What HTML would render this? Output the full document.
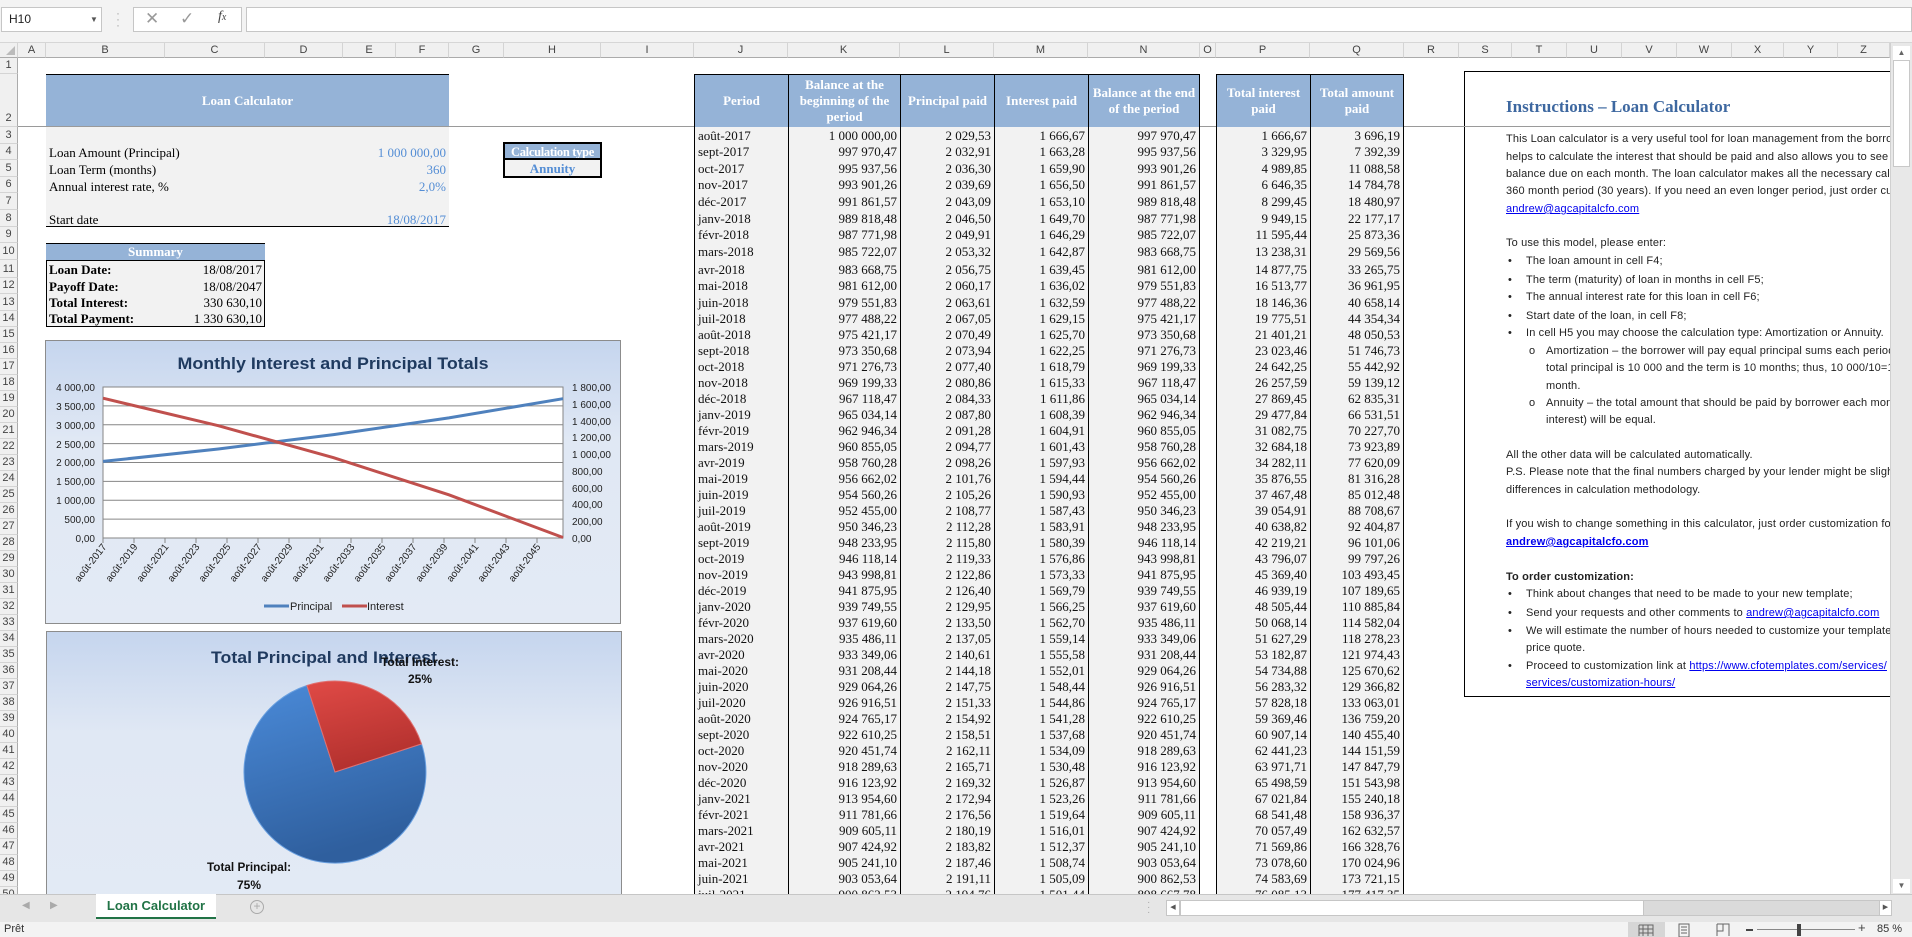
<!DOCTYPE html>
<html><head><meta charset="utf-8">
<style>
*{box-sizing:border-box;margin:0;padding:0}
body{width:1912px;height:937px;overflow:hidden;background:#fff;position:relative;font-family:"Liberation Sans",sans-serif}
.a{position:absolute}
#top{left:0;top:0;width:1912px;height:43px;background:#f3f3f3;border-bottom:1px solid #d6d6d6}
.ch{position:absolute;top:43px;height:15px;font-size:11px;color:#444;text-align:center;line-height:15px;border-right:1px solid #d4d4d4;background:#f0f0f0;border-bottom:1px solid #ababab}
.rn{position:absolute;left:0;width:18px;font-size:11px;color:#444;background:#f0f0f0;border-bottom:1px solid #d4d4d4;border-right:1px solid #ababab;display:flex;align-items:flex-end;justify-content:center;line-height:13px;padding-bottom:1px}
.sv{font-family:"Liberation Serif",serif;font-size:13px}
.r{position:absolute;left:694px;display:flex;font-family:"Liberation Serif",serif;font-size:13px;color:#111}
.r span{display:block;background:#f2f2f2;border-left:1px solid #000;text-align:right;padding-right:3px;white-space:nowrap;overflow:hidden;line-height:17px;display:flex;align-items:flex-end;justify-content:flex-end}
.r span:nth-child(1){width:94px;justify-content:flex-start;padding-left:3px}
.r span:nth-child(2){width:112px}
.r span:nth-child(3){width:94px}
.r span:nth-child(4){width:94px}
.r span:nth-child(5){width:112px;border-right:1px solid #000}
.r span:nth-child(6){width:94px;margin-left:16px}
.r span:nth-child(7){width:94px;border-right:1px solid #000}
.h span{background:#95b3d7;color:#fff;font-weight:bold;justify-content:center;align-items:center;text-align:center;line-height:16px;padding:0 2px;white-space:normal;border-top:1px solid #000;border-left:1px solid #000}
.h span:nth-child(1){justify-content:center;padding:0}
.ins{position:absolute;left:1506px;font-size:11px;color:#222;white-space:nowrap;letter-spacing:0.15px}
.lk{color:#0000ee;text-decoration:underline}
</style></head><body>

<div id="top" class="a"></div>
<div class="a" style="left:1px;top:7px;width:101px;height:25px;background:#fff;border:1px solid #c6c6c6;font-size:12px;line-height:23px;padding-left:7px;color:#222">H10<span style="position:absolute;left:88px;top:0;font-size:8px;color:#555">▼</span></div>
<div class="a" style="left:116px;top:10px;color:#aaa;font-size:12px;line-height:6px">·<br>·<br>·</div>
<div class="a" style="left:133px;top:7px;width:109px;height:25px;background:#fff;border:1px solid #c6c6c6"></div>
<div class="a" style="left:145px;top:9px;font-size:17px;color:#999">✕</div>
<div class="a" style="left:180px;top:9px;font-size:17px;color:#999">✓</div>
<div class="a" style="left:218px;top:9px;font-size:14px;color:#444;font-style:italic;font-family:'Liberation Serif',serif">f<span style="font-size:10px">x</span></div>
<div class="a" style="left:246px;top:7px;width:1666px;height:25px;background:#fff;border:1px solid #c6c6c6"></div>

<div class="ch" style="left:0;width:18px;background:#f0f0f0"><span style="position:absolute;right:2px;bottom:2px;width:0;height:0;border-left:9px solid transparent;border-bottom:9px solid #bbb"></span></div>
<div class="ch" style="left:18px;width:28px">A</div><div class="ch" style="left:46px;width:119px">B</div><div class="ch" style="left:165px;width:100px">C</div><div class="ch" style="left:265px;width:78px">D</div><div class="ch" style="left:343px;width:53px">E</div><div class="ch" style="left:396px;width:53px">F</div><div class="ch" style="left:449px;width:55px">G</div><div class="ch" style="left:504px;width:97px">H</div><div class="ch" style="left:601px;width:93px">I</div><div class="ch" style="left:694px;width:94px">J</div><div class="ch" style="left:788px;width:112px">K</div><div class="ch" style="left:900px;width:94px">L</div><div class="ch" style="left:994px;width:94px">M</div><div class="ch" style="left:1088px;width:112px">N</div><div class="ch" style="left:1200px;width:16px">O</div><div class="ch" style="left:1216px;width:94px">P</div><div class="ch" style="left:1310px;width:94px">Q</div><div class="ch" style="left:1404px;width:55px">R</div><div class="ch" style="left:1459px;width:53px">S</div><div class="ch" style="left:1512px;width:55px">T</div><div class="ch" style="left:1567px;width:55px">U</div><div class="ch" style="left:1622px;width:55px">V</div><div class="ch" style="left:1677px;width:55px">W</div><div class="ch" style="left:1732px;width:52px">X</div><div class="ch" style="left:1784px;width:54px">Y</div><div class="ch" style="left:1838px;width:52px">Z</div><div class="ch" style="left:1890px;width:22px;border:none"></div>

<div class="a" style="left:0;top:58px;width:1890px;height:836px;overflow:hidden">
<div style="position:absolute;left:0;top:-58px;width:1890px;height:950px">

<div class="rn" style="top:58px;height:16px">1</div>
<div class="rn" style="top:74px;height:53px">2</div>
<div class="rn" style="top:127px;height:16.6px">3</div>
<div class="rn" style="top:143.6px;height:16.6px">4</div>
<div class="rn" style="top:160.2px;height:16.6px">5</div>
<div class="rn" style="top:176.8px;height:16.6px">6</div>
<div class="rn" style="top:193.4px;height:16.6px">7</div>
<div class="rn" style="top:210px;height:16.6px">8</div>
<div class="rn" style="top:226.6px;height:16.6px">9</div>
<div class="rn" style="top:243.2px;height:16.6px">10</div>
<div class="rn" style="top:259.8px;height:18.2px">11</div>
<div class="rn" style="top:278px;height:16.3px">12</div>
<div class="rn" style="top:294.3px;height:16.4px">13</div>
<div class="rn" style="top:310.7px;height:16.3px">14</div>
<div class="rn" style="top:327px;height:16px">15</div><div class="rn" style="top:343px;height:16px">16</div><div class="rn" style="top:359px;height:16px">17</div><div class="rn" style="top:375px;height:16px">18</div><div class="rn" style="top:391px;height:16px">19</div><div class="rn" style="top:407px;height:16px">20</div><div class="rn" style="top:423px;height:16px">21</div><div class="rn" style="top:439px;height:16px">22</div><div class="rn" style="top:455px;height:16px">23</div><div class="rn" style="top:471px;height:16px">24</div><div class="rn" style="top:487px;height:16px">25</div><div class="rn" style="top:503px;height:16px">26</div><div class="rn" style="top:519px;height:16px">27</div><div class="rn" style="top:535px;height:16px">28</div><div class="rn" style="top:551px;height:16px">29</div><div class="rn" style="top:567px;height:16px">30</div><div class="rn" style="top:583px;height:16px">31</div><div class="rn" style="top:599px;height:16px">32</div><div class="rn" style="top:615px;height:16px">33</div><div class="rn" style="top:631px;height:16px">34</div><div class="rn" style="top:647px;height:16px">35</div><div class="rn" style="top:663px;height:16px">36</div><div class="rn" style="top:679px;height:16px">37</div><div class="rn" style="top:695px;height:16px">38</div><div class="rn" style="top:711px;height:16px">39</div><div class="rn" style="top:727px;height:16px">40</div><div class="rn" style="top:743px;height:16px">41</div><div class="rn" style="top:759px;height:16px">42</div><div class="rn" style="top:775px;height:16px">43</div><div class="rn" style="top:791px;height:16px">44</div><div class="rn" style="top:807px;height:16px">45</div><div class="rn" style="top:823px;height:16px">46</div><div class="rn" style="top:839px;height:16px">47</div><div class="rn" style="top:855px;height:16px">48</div><div class="rn" style="top:871px;height:16px">49</div><div class="rn" style="top:887px;height:16px">50</div>

<div class="a" style="left:18px;top:126px;width:1872px;height:1px;background:#9a9a9a"></div>

<div class="a sv" style="left:46px;top:74px;width:403px;height:52px;background:#95b3d7;border-top:1px solid #000;color:#fff;font-weight:bold;text-align:center;line-height:52px">Loan Calculator</div>
<div class="a" style="left:46px;top:127px;width:403px;height:100px;background:#f2f2f2;border-bottom:1px solid #000"></div>
<div class="a sv" style="left:49px;top:144px;line-height:17px">Loan Amount (Principal)</div>
<div class="a sv" style="left:49px;top:161px;line-height:17px">Loan Term (months)</div>
<div class="a sv" style="left:49px;top:178px;line-height:17px">Annual interest rate, %</div>
<div class="a sv" style="left:49px;top:211px;line-height:17px">Start date</div>
<div class="a sv" style="left:250px;width:196px;text-align:right;top:144px;line-height:17px;color:#558ed5">1 000 000,00</div>
<div class="a sv" style="left:250px;width:196px;text-align:right;top:161px;line-height:17px;color:#558ed5">360</div>
<div class="a sv" style="left:250px;width:196px;text-align:right;top:178px;line-height:17px;color:#558ed5">2,0%</div>
<div class="a sv" style="left:250px;width:196px;text-align:right;top:211px;line-height:17px;color:#558ed5">18/08/2017</div>

<div class="a sv" style="left:46px;top:243px;width:219px;height:17px;background:#95b3d7;border-top:1px solid #000;color:#fff;font-weight:bold;text-align:center;line-height:16px">Summary</div>
<div class="a" style="left:46px;top:260px;width:219px;height:67px;background:#f2f2f2;border:1.5px solid #000"></div>
<div class="a sv" style="left:49px;top:261px;line-height:17px;font-weight:bold">Loan Date:</div>
<div class="a sv" style="left:49px;top:278px;line-height:17px;font-weight:bold">Payoff Date:</div>
<div class="a sv" style="left:49px;top:294px;line-height:17px;font-weight:bold">Total Interest:</div>
<div class="a sv" style="left:49px;top:310px;line-height:17px;font-weight:bold">Total Payment:</div>
<div class="a sv" style="left:140px;width:122px;text-align:right;top:261px;line-height:17px">18/08/2017</div>
<div class="a sv" style="left:140px;width:122px;text-align:right;top:278px;line-height:17px">18/08/2047</div>
<div class="a sv" style="left:140px;width:122px;text-align:right;top:294px;line-height:17px">330 630,10</div>
<div class="a sv" style="left:140px;width:122px;text-align:right;top:310px;line-height:17px">1 330 630,10</div>

<div class="a sv" style="left:503px;top:142px;width:99px;height:36px;border:2px solid #000;background:#f2f2f2"></div>
<div class="a sv" style="left:505px;top:144px;width:95px;height:16px;background:#95b3d7;color:#fff;font-weight:bold;text-align:center;line-height:16px;border-bottom:2px solid #000;font-size:12.5px;letter-spacing:-0.3px;white-space:nowrap;overflow:hidden">Calculation type</div>
<div class="a sv" style="left:505px;top:161px;width:95px;height:15px;color:#558ed5;font-weight:bold;text-align:center;line-height:15px">Annuity</div>

<svg class="a" style="left:45px;top:340px" width="576" height="284" font-family="Liberation Sans, sans-serif">
<defs><linearGradient id="g1" x1="0" y1="0" x2="0" y2="1"><stop offset="0" stop-color="#c5d5ee"/><stop offset="0.35" stop-color="#e0e8f4"/><stop offset="1" stop-color="#e3eaf5"/></linearGradient></defs>
<rect x="0.5" y="0.5" width="575" height="283" fill="url(#g1)" stroke="#8c8c8c"/>
<text x="288" y="29" text-anchor="middle" font-size="17" font-weight="bold" fill="#1f3a5f" textLength="311" lengthAdjust="spacingAndGlyphs">Monthly Interest and Principal Totals</text>
<rect x="58" y="47" width="460" height="151" fill="#fff" stroke="#868686"/>
<g stroke="#868686" stroke-width="1">
<line x1="58" y1="65.9" x2="518" y2="65.9"/><line x1="58" y1="84.75" x2="518" y2="84.75"/><line x1="58" y1="103.6" x2="518" y2="103.6"/><line x1="58" y1="122.5" x2="518" y2="122.5"/><line x1="58" y1="141.4" x2="518" y2="141.4"/><line x1="58" y1="160.25" x2="518" y2="160.25"/><line x1="58" y1="179.1" x2="518" y2="179.1"/>
</g>
<g font-size="10" fill="#222" text-anchor="end">
<text x="50" y="51">4 000,00</text><text x="50" y="70">3 500,00</text><text x="50" y="89">3 000,00</text><text x="50" y="108">2 500,00</text><text x="50" y="126">2 000,00</text><text x="50" y="145">1 500,00</text><text x="50" y="164">1 000,00</text><text x="50" y="183">500,00</text><text x="50" y="202">0,00</text>
</g>
<g font-size="10" fill="#222">
<text x="527" y="51">1 800,00</text><text x="527" y="68">1 600,00</text><text x="527" y="85">1 400,00</text><text x="527" y="101">1 200,00</text><text x="527" y="118">1 000,00</text><text x="527" y="135">800,00</text><text x="527" y="152">600,00</text><text x="527" y="168">400,00</text><text x="527" y="185">200,00</text><text x="527" y="202">0,00</text>
</g>
<g stroke="#868686"><line x1="58" y1="198" x2="58" y2="203"/><line x1="89" y1="198" x2="89" y2="203"/><line x1="120" y1="198" x2="120" y2="203"/><line x1="151" y1="198" x2="151" y2="203"/><line x1="182" y1="198" x2="182" y2="203"/><line x1="213" y1="198" x2="213" y2="203"/><line x1="244" y1="198" x2="244" y2="203"/><line x1="275" y1="198" x2="275" y2="203"/><line x1="306" y1="198" x2="306" y2="203"/><line x1="337" y1="198" x2="337" y2="203"/><line x1="368" y1="198" x2="368" y2="203"/><line x1="399" y1="198" x2="399" y2="203"/><line x1="430" y1="198" x2="430" y2="203"/><line x1="461" y1="198" x2="461" y2="203"/><line x1="492" y1="198" x2="492" y2="203"/></g>
<g font-size="10" fill="#222" text-anchor="end">
<text transform="translate(62,207) rotate(-52)">août-2017</text><text transform="translate(93,207) rotate(-52)">août-2019</text><text transform="translate(124,207) rotate(-52)">août-2021</text><text transform="translate(155,207) rotate(-52)">août-2023</text><text transform="translate(186,207) rotate(-52)">août-2025</text><text transform="translate(217,207) rotate(-52)">août-2027</text><text transform="translate(248,207) rotate(-52)">août-2029</text><text transform="translate(279,207) rotate(-52)">août-2031</text><text transform="translate(310,207) rotate(-52)">août-2033</text><text transform="translate(341,207) rotate(-52)">août-2035</text><text transform="translate(372,207) rotate(-52)">août-2037</text><text transform="translate(403,207) rotate(-52)">août-2039</text><text transform="translate(434,207) rotate(-52)">août-2041</text><text transform="translate(465,207) rotate(-52)">août-2043</text><text transform="translate(496,207) rotate(-52)">août-2045</text>
</g>
<polyline points="58,121.4 173.3,109 288.6,94.6 403.9,77.9 518,58.7" fill="none" stroke="#4f81bd" stroke-width="3"/>
<polyline points="58,58.2 173.3,85.7 288.6,117.7 403.9,154.8 518,197.5" fill="none" stroke="#c0504d" stroke-width="3"/>
<line x1="219" y1="266" x2="244" y2="266" stroke="#4f81bd" stroke-width="3"/>
<text x="245" y="270" font-size="11" fill="#222">Principal</text>
<line x1="297" y1="266" x2="322" y2="266" stroke="#c0504d" stroke-width="3"/>
<text x="322" y="270" font-size="11" fill="#222">Interest</text>
</svg>

<svg class="a" style="left:46px;top:631px" width="576" height="280" font-family="Liberation Sans, sans-serif">
<defs>
<linearGradient id="g2" x1="0" y1="0" x2="0" y2="1"><stop offset="0" stop-color="#c5d5ee"/><stop offset="0.35" stop-color="#e0e8f4"/><stop offset="1" stop-color="#e3eaf5"/></linearGradient>
<linearGradient id="gb" x1="0" y1="0" x2="0.3" y2="1"><stop offset="0" stop-color="#4a8ad8"/><stop offset="1" stop-color="#2f5f9e"/></linearGradient>
<linearGradient id="gr" x1="0" y1="0" x2="0.3" y2="1"><stop offset="0" stop-color="#e04a46"/><stop offset="1" stop-color="#b3312e"/></linearGradient>
</defs>
<rect x="0.5" y="0.5" width="575" height="290" fill="url(#g2)" stroke="#8c8c8c"/>
<text x="278" y="32" text-anchor="middle" font-size="17" font-weight="bold" fill="#1f3a5f" textLength="226" lengthAdjust="spacingAndGlyphs">Total Principal and Interest</text>
<path d="M289,141 L375.5,112.9 A91,91 0 1 1 260.9,54.5 Z" fill="url(#gb)" stroke="#6aa0e0" stroke-width="1"/>
<path d="M289,141 L260.9,54.5 A91,91 0 0 1 375.5,112.9 Z" fill="url(#gr)" stroke="#e07070" stroke-width="1"/>
<text x="374" y="35" text-anchor="middle" font-size="12" font-weight="bold" fill="#111" textLength="78" lengthAdjust="spacingAndGlyphs">Total Interest:</text>
<text x="374" y="52" text-anchor="middle" font-size="12" font-weight="bold" fill="#111">25%</text>
<text x="203" y="240" text-anchor="middle" font-size="12" font-weight="bold" fill="#111" textLength="84" lengthAdjust="spacingAndGlyphs">Total Principal:</text>
<text x="203" y="258" text-anchor="middle" font-size="12" font-weight="bold" fill="#111">75%</text>
</svg>

<div class="r h" style="top:74px;height:53px"><span>Period</span><span>Balance at the beginning of the period</span><span>Principal paid</span><span>Interest paid</span><span>Balance at the end of the period</span><span>Total interest paid</span><span>Total amount paid</span></div>
<div class="r" style="top:127px;height:16.6px"><span>août-2017</span><span>1 000 000,00</span><span>2 029,53</span><span>1 666,67</span><span>997 970,47</span><span>1 666,67</span><span>3 696,19</span></div>
<div class="r" style="top:143.6px;height:16.6px"><span>sept-2017</span><span>997 970,47</span><span>2 032,91</span><span>1 663,28</span><span>995 937,56</span><span>3 329,95</span><span>7 392,39</span></div>
<div class="r" style="top:160.2px;height:16.6px"><span>oct-2017</span><span>995 937,56</span><span>2 036,30</span><span>1 659,90</span><span>993 901,26</span><span>4 989,85</span><span>11 088,58</span></div>
<div class="r" style="top:176.8px;height:16.6px"><span>nov-2017</span><span>993 901,26</span><span>2 039,69</span><span>1 656,50</span><span>991 861,57</span><span>6 646,35</span><span>14 784,78</span></div>
<div class="r" style="top:193.4px;height:16.6px"><span>déc-2017</span><span>991 861,57</span><span>2 043,09</span><span>1 653,10</span><span>989 818,48</span><span>8 299,45</span><span>18 480,97</span></div>
<div class="r" style="top:210px;height:16.6px"><span>janv-2018</span><span>989 818,48</span><span>2 046,50</span><span>1 649,70</span><span>987 771,98</span><span>9 949,15</span><span>22 177,17</span></div>
<div class="r" style="top:226.6px;height:16.6px"><span>févr-2018</span><span>987 771,98</span><span>2 049,91</span><span>1 646,29</span><span>985 722,07</span><span>11 595,44</span><span>25 873,36</span></div>
<div class="r" style="top:243.2px;height:16.6px"><span>mars-2018</span><span>985 722,07</span><span>2 053,32</span><span>1 642,87</span><span>983 668,75</span><span>13 238,31</span><span>29 569,56</span></div>
<div class="r" style="top:259.8px;height:18.2px"><span>avr-2018</span><span>983 668,75</span><span>2 056,75</span><span>1 639,45</span><span>981 612,00</span><span>14 877,75</span><span>33 265,75</span></div>
<div class="r" style="top:278px;height:16.3px"><span>mai-2018</span><span>981 612,00</span><span>2 060,17</span><span>1 636,02</span><span>979 551,83</span><span>16 513,77</span><span>36 961,95</span></div>
<div class="r" style="top:294.3px;height:16.4px"><span>juin-2018</span><span>979 551,83</span><span>2 063,61</span><span>1 632,59</span><span>977 488,22</span><span>18 146,36</span><span>40 658,14</span></div>
<div class="r" style="top:310.7px;height:16.3px"><span>juil-2018</span><span>977 488,22</span><span>2 067,05</span><span>1 629,15</span><span>975 421,17</span><span>19 775,51</span><span>44 354,34</span></div>
<div class="r" style="top:327px;height:16px"><span>août-2018</span><span>975 421,17</span><span>2 070,49</span><span>1 625,70</span><span>973 350,68</span><span>21 401,21</span><span>48 050,53</span></div>
<div class="r" style="top:343px;height:16px"><span>sept-2018</span><span>973 350,68</span><span>2 073,94</span><span>1 622,25</span><span>971 276,73</span><span>23 023,46</span><span>51 746,73</span></div>
<div class="r" style="top:359px;height:16px"><span>oct-2018</span><span>971 276,73</span><span>2 077,40</span><span>1 618,79</span><span>969 199,33</span><span>24 642,25</span><span>55 442,92</span></div>
<div class="r" style="top:375px;height:16px"><span>nov-2018</span><span>969 199,33</span><span>2 080,86</span><span>1 615,33</span><span>967 118,47</span><span>26 257,59</span><span>59 139,12</span></div>
<div class="r" style="top:391px;height:16px"><span>déc-2018</span><span>967 118,47</span><span>2 084,33</span><span>1 611,86</span><span>965 034,14</span><span>27 869,45</span><span>62 835,31</span></div>
<div class="r" style="top:407px;height:16px"><span>janv-2019</span><span>965 034,14</span><span>2 087,80</span><span>1 608,39</span><span>962 946,34</span><span>29 477,84</span><span>66 531,51</span></div>
<div class="r" style="top:423px;height:16px"><span>févr-2019</span><span>962 946,34</span><span>2 091,28</span><span>1 604,91</span><span>960 855,05</span><span>31 082,75</span><span>70 227,70</span></div>
<div class="r" style="top:439px;height:16px"><span>mars-2019</span><span>960 855,05</span><span>2 094,77</span><span>1 601,43</span><span>958 760,28</span><span>32 684,18</span><span>73 923,89</span></div>
<div class="r" style="top:455px;height:16px"><span>avr-2019</span><span>958 760,28</span><span>2 098,26</span><span>1 597,93</span><span>956 662,02</span><span>34 282,11</span><span>77 620,09</span></div>
<div class="r" style="top:471px;height:16px"><span>mai-2019</span><span>956 662,02</span><span>2 101,76</span><span>1 594,44</span><span>954 560,26</span><span>35 876,55</span><span>81 316,28</span></div>
<div class="r" style="top:487px;height:16px"><span>juin-2019</span><span>954 560,26</span><span>2 105,26</span><span>1 590,93</span><span>952 455,00</span><span>37 467,48</span><span>85 012,48</span></div>
<div class="r" style="top:503px;height:16px"><span>juil-2019</span><span>952 455,00</span><span>2 108,77</span><span>1 587,43</span><span>950 346,23</span><span>39 054,91</span><span>88 708,67</span></div>
<div class="r" style="top:519px;height:16px"><span>août-2019</span><span>950 346,23</span><span>2 112,28</span><span>1 583,91</span><span>948 233,95</span><span>40 638,82</span><span>92 404,87</span></div>
<div class="r" style="top:535px;height:16px"><span>sept-2019</span><span>948 233,95</span><span>2 115,80</span><span>1 580,39</span><span>946 118,14</span><span>42 219,21</span><span>96 101,06</span></div>
<div class="r" style="top:551px;height:16px"><span>oct-2019</span><span>946 118,14</span><span>2 119,33</span><span>1 576,86</span><span>943 998,81</span><span>43 796,07</span><span>99 797,26</span></div>
<div class="r" style="top:567px;height:16px"><span>nov-2019</span><span>943 998,81</span><span>2 122,86</span><span>1 573,33</span><span>941 875,95</span><span>45 369,40</span><span>103 493,45</span></div>
<div class="r" style="top:583px;height:16px"><span>déc-2019</span><span>941 875,95</span><span>2 126,40</span><span>1 569,79</span><span>939 749,55</span><span>46 939,19</span><span>107 189,65</span></div>
<div class="r" style="top:599px;height:16px"><span>janv-2020</span><span>939 749,55</span><span>2 129,95</span><span>1 566,25</span><span>937 619,60</span><span>48 505,44</span><span>110 885,84</span></div>
<div class="r" style="top:615px;height:16px"><span>févr-2020</span><span>937 619,60</span><span>2 133,50</span><span>1 562,70</span><span>935 486,11</span><span>50 068,14</span><span>114 582,04</span></div>
<div class="r" style="top:631px;height:16px"><span>mars-2020</span><span>935 486,11</span><span>2 137,05</span><span>1 559,14</span><span>933 349,06</span><span>51 627,29</span><span>118 278,23</span></div>
<div class="r" style="top:647px;height:16px"><span>avr-2020</span><span>933 349,06</span><span>2 140,61</span><span>1 555,58</span><span>931 208,44</span><span>53 182,87</span><span>121 974,43</span></div>
<div class="r" style="top:663px;height:16px"><span>mai-2020</span><span>931 208,44</span><span>2 144,18</span><span>1 552,01</span><span>929 064,26</span><span>54 734,88</span><span>125 670,62</span></div>
<div class="r" style="top:679px;height:16px"><span>juin-2020</span><span>929 064,26</span><span>2 147,75</span><span>1 548,44</span><span>926 916,51</span><span>56 283,32</span><span>129 366,82</span></div>
<div class="r" style="top:695px;height:16px"><span>juil-2020</span><span>926 916,51</span><span>2 151,33</span><span>1 544,86</span><span>924 765,17</span><span>57 828,18</span><span>133 063,01</span></div>
<div class="r" style="top:711px;height:16px"><span>août-2020</span><span>924 765,17</span><span>2 154,92</span><span>1 541,28</span><span>922 610,25</span><span>59 369,46</span><span>136 759,20</span></div>
<div class="r" style="top:727px;height:16px"><span>sept-2020</span><span>922 610,25</span><span>2 158,51</span><span>1 537,68</span><span>920 451,74</span><span>60 907,14</span><span>140 455,40</span></div>
<div class="r" style="top:743px;height:16px"><span>oct-2020</span><span>920 451,74</span><span>2 162,11</span><span>1 534,09</span><span>918 289,63</span><span>62 441,23</span><span>144 151,59</span></div>
<div class="r" style="top:759px;height:16px"><span>nov-2020</span><span>918 289,63</span><span>2 165,71</span><span>1 530,48</span><span>916 123,92</span><span>63 971,71</span><span>147 847,79</span></div>
<div class="r" style="top:775px;height:16px"><span>déc-2020</span><span>916 123,92</span><span>2 169,32</span><span>1 526,87</span><span>913 954,60</span><span>65 498,59</span><span>151 543,98</span></div>
<div class="r" style="top:791px;height:16px"><span>janv-2021</span><span>913 954,60</span><span>2 172,94</span><span>1 523,26</span><span>911 781,66</span><span>67 021,84</span><span>155 240,18</span></div>
<div class="r" style="top:807px;height:16px"><span>févr-2021</span><span>911 781,66</span><span>2 176,56</span><span>1 519,64</span><span>909 605,11</span><span>68 541,48</span><span>158 936,37</span></div>
<div class="r" style="top:823px;height:16px"><span>mars-2021</span><span>909 605,11</span><span>2 180,19</span><span>1 516,01</span><span>907 424,92</span><span>70 057,49</span><span>162 632,57</span></div>
<div class="r" style="top:839px;height:16px"><span>avr-2021</span><span>907 424,92</span><span>2 183,82</span><span>1 512,37</span><span>905 241,10</span><span>71 569,86</span><span>166 328,76</span></div>
<div class="r" style="top:855px;height:16px"><span>mai-2021</span><span>905 241,10</span><span>2 187,46</span><span>1 508,74</span><span>903 053,64</span><span>73 078,60</span><span>170 024,96</span></div>
<div class="r" style="top:871px;height:16px"><span>juin-2021</span><span>903 053,64</span><span>2 191,11</span><span>1 505,09</span><span>900 862,53</span><span>74 583,69</span><span>173 721,15</span></div>
<div class="r" style="top:887px;height:16px"><span>juil-2021</span><span>900 862,53</span><span>2 194,76</span><span>1 501,44</span><span>898 667,78</span><span>76 085,13</span><span>177 417,35</span></div>

<div class="a" style="left:1464px;top:71px;width:440px;height:626px;border:1px solid #000;background:#fff"></div>
<div class="a" style="left:1464px;top:126px;width:426px;height:1px;background:#9a9a9a"></div>
<div class="a" style="left:1506px;top:97px;font-family:'Liberation Serif',serif;font-size:17px;font-weight:bold;color:#3e68a0;white-space:nowrap">Instructions – Loan Calculator</div>
<div class="ins" style="top:133px">This Loan calculator is a very useful tool for loan management from the borrower's</div>
<div class="ins" style="top:151px">helps to calculate the interest that should be paid and also allows you to see the</div>
<div class="ins" style="top:168px">balance due on each month. The loan calculator makes all the necessary calculations</div>
<div class="ins" style="top:185px">360 month period (30 years). If you need an even longer period, just order customization</div>
<div class="ins lk" style="top:203px">andrew@agcapitalcfo.com</div>
<div class="ins" style="top:237px">To use this model, please enter:</div>
<div class="ins" style="top:255px;left:1508px">•</div><div class="ins" style="top:255px;left:1526px">The loan amount in cell F4;</div>
<div class="ins" style="top:274px;left:1508px">•</div><div class="ins" style="top:274px;left:1526px">The term (maturity) of loan in months in cell F5;</div>
<div class="ins" style="top:291px;left:1508px">•</div><div class="ins" style="top:291px;left:1526px">The annual interest rate for this loan in cell F6;</div>
<div class="ins" style="top:310px;left:1508px">•</div><div class="ins" style="top:310px;left:1526px">Start date of the loan, in cell F8;</div>
<div class="ins" style="top:327px;left:1508px">•</div><div class="ins" style="top:327px;left:1526px">In cell H5 you may choose the calculation type: Amortization or Annuity.</div>
<div class="ins" style="top:345px;left:1529px">o</div><div class="ins" style="top:345px;left:1546px">Amortization – the borrower will pay equal principal sums each period</div>
<div class="ins" style="top:362px;left:1546px">total principal is 10 000 and the term is 10 months; thus, 10 000/10=1 000</div>
<div class="ins" style="top:380px;left:1546px">month.</div>
<div class="ins" style="top:397px;left:1529px">o</div><div class="ins" style="top:397px;left:1546px">Annuity – the total amount that should be paid by borrower each month</div>
<div class="ins" style="top:414px;left:1546px">interest) will be equal.</div>
<div class="ins" style="top:449px">All the other data will be calculated automatically.</div>
<div class="ins" style="top:466px">P.S. Please note that the final numbers charged by your lender might be slightly</div>
<div class="ins" style="top:484px">differences in calculation methodology.</div>
<div class="ins" style="top:518px">If you wish to change something in this calculator, just order customization for</div>
<div class="ins lk" style="top:536px;font-weight:bold">andrew@agcapitalcfo.com</div>
<div class="ins" style="top:571px;font-weight:bold">To order customization:</div>
<div class="ins" style="top:588px;left:1508px">•</div><div class="ins" style="top:588px;left:1526px">Think about changes that need to be made to your new template;</div>
<div class="ins" style="top:607px;left:1508px">•</div><div class="ins" style="top:607px;left:1526px">Send your requests and other comments to <span class="lk">andrew@agcapitalcfo.com</span></div>
<div class="ins" style="top:625px;left:1508px">•</div><div class="ins" style="top:625px;left:1526px">We will estimate the number of hours needed to customize your template</div>
<div class="ins" style="top:642px;left:1526px">price quote.</div>
<div class="ins" style="top:660px;left:1508px">•</div><div class="ins" style="top:660px;left:1526px">Proceed to customization link at <span class="lk">https://www.cfotemplates.com/services/</span></div>
<div class="ins lk" style="top:677px;left:1526px">services/customization-hours/</div>
</div>
</div>

<div class="a" style="left:1890px;top:43px;width:22px;height:851px;background:#e8e8e8;border-left:1px solid #d0d0d0"></div>
<div class="a" style="left:1893px;top:46px;width:17px;height:14px;background:#fff;font-size:8px;color:#666;text-align:center;line-height:14px">▲</div>
<div class="a" style="left:1893px;top:60px;width:17px;height:107px;background:#fff;border:1px solid #c8c8c8"></div>
<div class="a" style="left:1893px;top:879px;width:17px;height:14px;background:#fff;font-size:8px;color:#666;text-align:center;line-height:14px">▼</div>

<div class="a" style="left:0;top:894px;width:1912px;height:28px;background:#e6e6e6;border-top:1px solid #c6c6c6"></div>
<div class="a" style="left:22px;top:900px;font-size:10px;color:#aaa">◀</div>
<div class="a" style="left:50px;top:900px;font-size:10px;color:#aaa">▶</div>
<div class="a" style="left:96px;top:894px;width:120px;height:25px;background:#fff;border-bottom:2px solid #217346;color:#217346;font-weight:bold;font-size:13px;text-align:center;line-height:23px">Loan Calculator</div>
<div class="a" style="left:250px;top:900px;width:14px;height:14px;border:1px solid #aaa;border-radius:50%;color:#aaa;font-size:12px;line-height:11px;text-align:center">+</div>
<div class="a" style="left:1147px;top:900px;color:#aaa;font-size:10px;line-height:5px">·<br>·<br>·</div>
<div class="a" style="left:1166px;top:900px;width:726px;height:16px;background:#dadada;border:1px solid #c6c6c6"></div>
<div class="a" style="left:1166px;top:900px;width:14px;height:16px;background:#fff;border:1px solid #c6c6c6;font-size:7px;line-height:14px;text-align:center;color:#555">◀</div>
<div class="a" style="left:1180px;top:900px;width:464px;height:16px;background:#fff;border:1px solid #c6c6c6"></div>
<div class="a" style="left:1879px;top:900px;width:13px;height:16px;background:#fff;border:1px solid #c6c6c6;font-size:7px;line-height:14px;text-align:center;color:#555">▶</div>

<div class="a" style="left:0;top:922px;width:1912px;height:15px;background:#f3f3f3"></div>
<div class="a" style="left:4px;top:922px;font-size:11px;color:#333;line-height:15px">Prêt</div>
<div class="a" style="left:1628px;top:922px;width:37px;height:15px;background:#d6d6d6"></div>
<svg class="a" style="left:1638px;top:924px" width="16" height="12"><path d="M1 1H15V12M1 1V12M1 5H15M1 9H15M5 1V12M10 1V12" stroke="#666" fill="none"/></svg>
<svg class="a" style="left:1678px;top:923px" width="12" height="14"><rect x="1" y="1" width="10" height="13" fill="none" stroke="#666"/><path d="M3 4H9M3 7H9M3 10H9" stroke="#666"/></svg>
<svg class="a" style="left:1716px;top:923px" width="14" height="13"><path d="M1 1V13M1 1H13V13M7 1V8H1" stroke="#666" fill="none"/></svg>
<div class="a" style="left:1746px;top:929px;width:7px;height:2px;background:#444"></div>
<div class="a" style="left:1757px;top:929px;width:98px;height:1px;background:#888"></div>
<div class="a" style="left:1797px;top:924px;width:4px;height:12px;background:#444"></div>
<div class="a" style="left:1858px;top:920px;font-size:13px;color:#444">+</div>
<div class="a" style="left:1877px;top:922px;font-size:11px;color:#333;line-height:15px">85 %</div>
</body></html>
